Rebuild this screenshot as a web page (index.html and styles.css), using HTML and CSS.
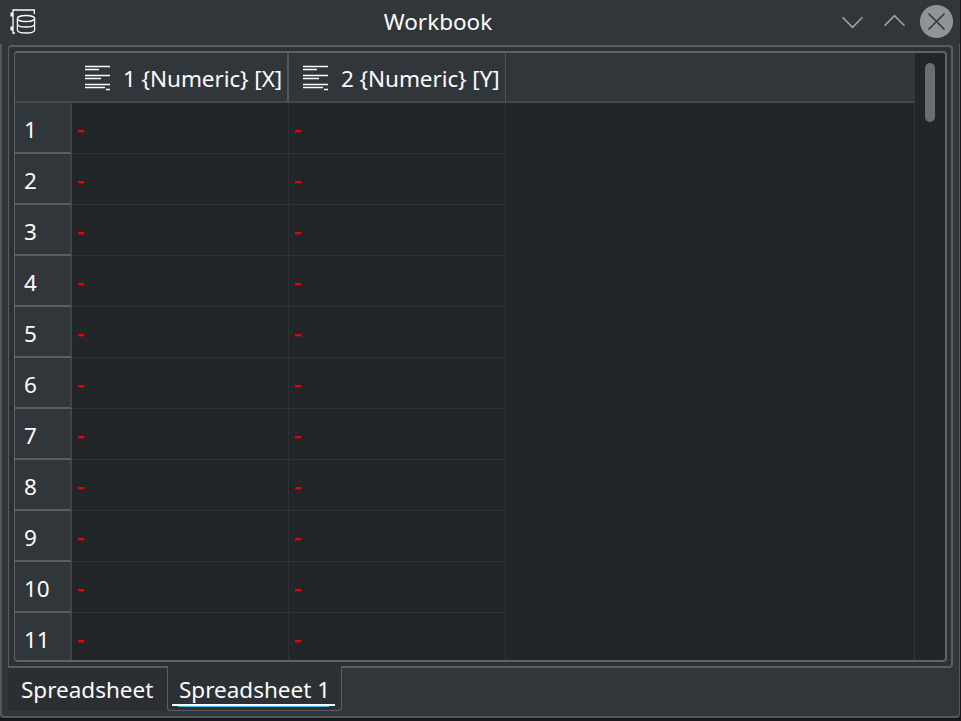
FILE: index.html
```html
<!DOCTYPE html>
<html lang="en">
<head>
<meta charset="utf-8">
<title>Workbook</title>
<link rel="stylesheet" href="styles.css">
</head>
<body>
<div class="window">
  <header class="titlebar">
    <svg class="app-icon" width="26" height="26" viewBox="0 0 26 26" fill="none" stroke="#fcfcfc" stroke-width="1.3">
      <path d="M24.3 5V1H3V24H5" /><path d="M0.5 5.5H3M0.5 19.5H3" stroke-width="4"/>
      <ellipse cx="16" cy="9.5" rx="8.6" ry="3"/><path d="M7.4 9.5V21C7.4 25 24.6 25 24.6 21V9.5M7.4 15C7.4 19 24.6 19 24.6 15"/>
    </svg>
    <h1>Workbook</h1>
    <svg class="controls" width="114" height="36" viewBox="0 0 114 36" fill="none" stroke="#a0a3a5" stroke-width="1.6">
      <path d="M2.5 14.3L12.5 24.3L22.5 14.3M44.5 22.7L54.5 12.7L64.5 22.7"/>
      <circle cx="96.5" cy="18.5" r="16.6" fill="#919495" stroke="none"/>
      <path d="M88.5 10.5L104.5 26.5M104.5 10.5L88.5 26.5" stroke="#31363b"/>
    </svg>
  </header>
  <main class="client">
    <section class="pane">
      <div class="sheet">
        <div class="grid">
          <div class="head">
            <div class="corner"></div>
            <div class="col"><svg width="26" height="26" viewBox="0 0 26 26"><path class="line" d="M0 1.5H25M0 4.5H14M0 10.5H25M0 13.5H16M0 19.5H25M0 22.5H20M21 24.5H25"/></svg><span>1 {Numeric} [X]</span></div>
            <div class="col last"><svg width="26" height="26" viewBox="0 0 26 26"><path class="line" d="M0 1.5H25M0 4.5H14M0 10.5H25M0 13.5H16M0 19.5H25M0 22.5H20M21 24.5H25"/></svg><span>2 {Numeric} [Y]</span></div>
          </div>
          <div class="rows">
            <div class="row"><b>1</b><i>-</i><i>-</i></div>
            <div class="row"><b>2</b><i>-</i><i>-</i></div>
            <div class="row"><b>3</b><i>-</i><i>-</i></div>
            <div class="row"><b>4</b><i>-</i><i>-</i></div>
            <div class="row"><b>5</b><i>-</i><i>-</i></div>
            <div class="row"><b>6</b><i>-</i><i>-</i></div>
            <div class="row"><b>7</b><i>-</i><i>-</i></div>
            <div class="row"><b>8</b><i>-</i><i>-</i></div>
            <div class="row"><b>9</b><i>-</i><i>-</i></div>
            <div class="row"><b>10</b><i>-</i><i>-</i></div>
            <div class="row"><b>11</b><i>-</i><i>-</i></div>
          </div>
        </div>
        <div class="scrollbar"><div class="thumb"></div></div>
      </div>
    </section>
    <nav class="tabs">
      <div class="tab">Spreadsheet</div>
      <div class="tab active"><span>Spreadsheet 1</span></div>
    </nav>
  </main>
</div>
</body>
</html>
```
FILE: styles.css
```css
* { box-sizing: border-box; }
body {
  margin: 0;
  background: #17191c;
  color: #fcfcfc;
  font: 22.5px/30px "Noto Sans", sans-serif;
  overflow: hidden;
}
.window { width: 960px; height: 718px; background: #31363b; border-radius: 0 0 4px 4px; }
.titlebar {
  height: 44px;
  display: grid;
  grid-template-columns: 114px 1fr 114px;
  padding: 0 6px 0 10px;
}
.app-icon { margin-top: 9px; }
.titlebar h1 { margin: 7px 0 0; font-size: inherit; font-weight: 400; text-align: center; padding-right: 88px; padding-left: 0; }
.controls { margin-top: 3px; }
.client {
  height: 674px;
  border: 2px solid #54585c;
  border-right-width: 1px;
  border-top: 0;
  border-radius: 0 0 4px 4px;
  padding: 1px 6px 0;
}
.pane {
  height: 623px;
  border: 2px solid #5a5e62;
  border-left-width: 1px;
  border-radius: 4px;
  border-bottom-left-radius: 0;
  padding: 4px 4px 4px 5px;
  background: #2d3136;
}
.sheet {
  height: 611px;
  border: 2px solid #5f6367;
  border-left-width: 1px;
  border-radius: 4px;
  display: flex;
  overflow: hidden;
  background: #232629;
}
.grid { flex: 1; overflow: hidden; }
.head { display: flex; height: 50px; background: #31363b; border-bottom: 2px solid #45494c; }
.corner { width: 56px; }
.col { width: 218px; border-right: 2px solid #54585b; display: flex; padding: 12px 0 0 14px; white-space: nowrap; }
.col.last { width: 217px; border-right-width: 1px; }
.col span { margin: -1px 0 0 12px; letter-spacing: -0.08px; }
.line { stroke: #fcfcfc; stroke-width: 1.4; }
.row { display: flex; height: 51px; }
.row b {
  width: 57px;
  font-weight: 400;
  background: #31363b;
  border-right: 2px solid #404447;
  border-bottom: 2px solid #5a5e61;
  padding: 12px 0 0 9px;
}
.row i {
  width: 217px;
  font-style: normal;
  color: #f00000;
  -webkit-text-stroke: 0.4px #f00000;
  border-right: 1px solid #2e3235;
  border-bottom: 1px solid #2e3235;
  padding: 11px 0 0 5px;
}
.scrollbar { width: 31px; border-left: 1px solid #33373a; padding: 10px 0 0 10px; }
.thumb { width: 10px; height: 59px; border-radius: 5px; background: #6b6d6f; }
.tabs { display: flex; }
.tab { width: 159px; height: 43px; background: #2b2f33; border-radius: 0 0 0 3px; padding: 7px 0 0 13px; white-space: nowrap; }
.tab.active {
  position: relative;
  width: 175px;
  height: 45px;
  margin-top: -2px;
  background: #2d3136;
  border: 1.5px solid #5a5e62;
  border-top: 0;
  border-radius: 0 0 4px 4px;
  padding: 9px 0 0 11px;
}
.tab.active::before, .tab.active::after { content: ""; position: absolute; height: 2px; }
.tab.active::before { left: 4px; right: 6px; top: 38px; background: #fcfcfc; }
.tab.active::after { left: 10px; right: 12px; top: 40px; height: 1px; background: #3daee9; }
```
